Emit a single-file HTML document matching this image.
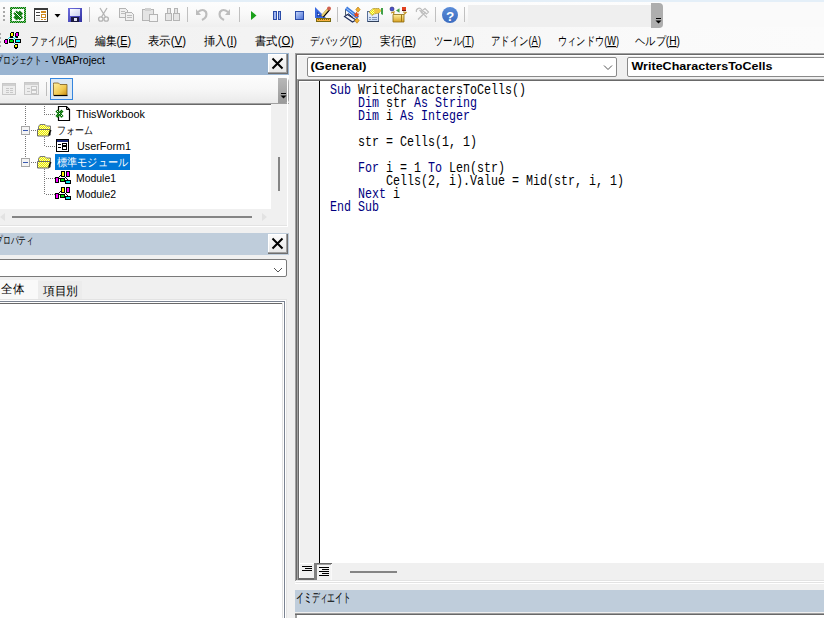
<!DOCTYPE html>
<html><head><meta charset="utf-8">
<style>
*{box-sizing:border-box}
html,body{margin:0;padding:0}
body{width:824px;height:618px;overflow:hidden;position:relative;background:#F0F0F0;font-family:"Liberation Sans",sans-serif;font-size:12px;color:#000}
.a{position:absolute}
#topband{left:0;top:0;width:824px;height:2px;background:#E4EFF8}
#top{left:0;top:2px;width:824px;height:51px;background:#FAFAFA}
#tb{left:0;top:2px;width:663px;height:25px;background:linear-gradient(#FDFDFD,#FAFAFA 40%,#EFEFEF);border-radius:3px 0 0 0}
#mb{left:0;top:27px;width:824px;height:26px;background:linear-gradient(to right,#F0F0F0,#F4F4F4 40%,#FAFAFA 80%,#FBFBFB)}
.code{position:absolute;left:330px;top:84px;font-family:"Liberation Mono",monospace;font-size:15px;line-height:13px;transform:scaleX(0.7778);transform-origin:0 0;white-space:pre;color:#000}
.k{color:#00007F}
</style></head><body>
<div id="topband" class="a"></div>
<div id="top" class="a"></div>
<div id="tb" class="a"></div>
<div id="mb" class="a"></div>
<svg class="a" style="left:0;top:0" width="680" height="30" shape-rendering="crispEdges">
<!-- grip -->
<g fill="#A8A8A8"><rect x="3" y="7" width="2" height="2"/><rect x="3" y="11" width="2" height="2"/><rect x="3" y="15" width="2" height="2"/><rect x="3" y="19" width="2" height="2"/></g>
<!-- excel -->
<defs><pattern id="chk" x="0" y="0" width="2" height="2" patternUnits="userSpaceOnUse"><rect width="2" height="2" fill="#7CB87C"/><rect width="1" height="1" fill="#008000"/><rect x="1" y="1" width="1" height="1" fill="#008000"/></pattern>
<pattern id="chk2" x="0" y="0" width="2" height="2" patternUnits="userSpaceOnUse"><rect width="2" height="2" fill="#2E9A2E"/><rect width="1" height="1" fill="#006400"/><rect x="1" y="1" width="1" height="1" fill="#006400"/></pattern></defs>
<rect x="10" y="7" width="16" height="16" fill="url(#chk)"/>
<rect x="12" y="9" width="12" height="12" fill="#FFFFFF"/>
<path d="M15 12 L21.5 19 M21.5 12 L15 19" stroke="url(#chk2)" stroke-width="4.6" shape-rendering="auto"/>
<g fill="#FFFFFF"><rect x="14" y="11" width="1" height="1"/><rect x="15" y="12" width="1" height="1"/><rect x="16" y="13" width="1" height="1"/><rect x="17" y="14" width="1" height="1"/><rect x="18" y="15" width="1" height="1"/><rect x="19" y="16" width="1" height="1"/><rect x="20" y="17" width="1" height="1"/></g>
<!-- userform -->
<rect x="34" y="8" width="14" height="14" fill="#3A3A3A"/>
<rect x="35" y="10" width="12" height="11" fill="#fff"/>
<rect x="36" y="12" width="4" height="1" fill="#444"/><rect x="36" y="15" width="4" height="1" fill="#444"/>
<rect x="36" y="17" width="4" height="3" fill="#E8E8E8"/>
<rect x="41" y="11" width="5" height="2" fill="#D08A20"/><rect x="41" y="14" width="5" height="4" fill="#D08A20"/><rect x="42" y="15" width="3" height="2" fill="#fff"/><rect x="41" y="19" width="2" height="1" fill="#D08A20"/><rect x="44" y="19" width="2" height="1" fill="#D08A20"/>
<path d="M54.5 14 h6 l-3 3.5z" fill="#000" shape-rendering="auto"/>
<!-- save -->
<defs><linearGradient id="sav" x1="0" y1="0" x2="1" y2="1"><stop offset="0" stop-color="#7070E0"/><stop offset="1" stop-color="#3030A0"/></linearGradient>
<linearGradient id="lab" x1="0" y1="0" x2="1" y2="1"><stop offset="0" stop-color="#FFFFFF"/><stop offset="1" stop-color="#C8D0F0"/></linearGradient></defs>
<rect x="68" y="8" width="14" height="14" fill="url(#sav)"/>
<rect x="70" y="9" width="10" height="7" fill="url(#lab)"/>
<rect x="71" y="17" width="8" height="5" fill="#1A1A40"/><rect x="74" y="18" width="3" height="3" fill="#E0E0F0"/>
<rect x="89" y="7" width="1" height="15" fill="#C0C0C0"/>
<!-- cut (disabled) -->
<g fill="none" stroke="#B4B4B4" stroke-width="1.3" shape-rendering="auto"><path d="M100 8 L105.5 17 M107 8 L101.5 17"/><circle cx="100.8" cy="19" r="2.2"/><circle cx="106.2" cy="19" r="2.2"/></g>
<!-- copy -->
<g fill="#F0F0F0" stroke="#B4B4B4"><path d="M119.5 8.5 h6 l2 2 v7 h-8z"/><path d="M125.5 12.5 h6 l2 2 v6 h-8z"/></g>
<g fill="#BDBDBD"><rect x="121" y="11" width="4" height="1"/><rect x="121" y="13" width="4" height="1"/><rect x="127" y="15" width="5" height="1"/><rect x="127" y="17" width="5" height="1"/></g>
<!-- paste -->
<rect x="142.5" y="9.5" width="11" height="11" fill="#E4E4E4" stroke="#B4B4B4"/>
<rect x="145" y="8" width="6" height="3" fill="#D0D0D0"/>
<rect x="149.5" y="14.5" width="8" height="7" fill="#F4F4F4" stroke="#B4B4B4"/>
<!-- find -->
<g fill="#E6E6E6" stroke="#B4B4B4"><rect x="165.5" y="13.5" width="6" height="7"/><rect x="173.5" y="13.5" width="6" height="7"/><rect x="167.5" y="8.5" width="3" height="5"/><rect x="174.5" y="8.5" width="3" height="5"/></g>
<rect x="187" y="7" width="1" height="15" fill="#C0C0C0"/>
<!-- undo / redo -->
<g fill="none" stroke="#BDBDBD" stroke-width="2.2" shape-rendering="auto"><path d="M198 12 Q203 8 206 12 Q208 17 202 20"/><path d="M228 12 Q223 8 220 12 Q218 17 224 20"/></g>
<g fill="#BDBDBD" shape-rendering="auto"><path d="M196 9 v6 h5z"/><path d="M230 9 v6 h-5z"/></g>
<rect x="239" y="7" width="1" height="15" fill="#C0C0C0"/>
<!-- run -->
<path d="M251 11 L256.5 15.5 L251 20z" fill="#1AA01A" shape-rendering="auto"/>
<!-- pause -->
<rect x="273.5" y="11.5" width="2.5" height="8" fill="#9DB4F0" stroke="#2B4CA8" stroke-width="1"/><rect x="278" y="11.5" width="2.5" height="8" fill="#9DB4F0" stroke="#2B4CA8" stroke-width="1"/>
<!-- stop -->
<defs><linearGradient id="stp" x1="0" y1="0" x2="1" y2="1"><stop offset="0" stop-color="#C8D8FA"/><stop offset="1" stop-color="#4A70D8"/></linearGradient></defs><rect x="295.5" y="11.5" width="8" height="8" fill="url(#stp)" stroke="#2B4CA8" stroke-width="1"/>
<!-- design -->
<g shape-rendering="auto">
<path d="M315 7 L315 18 L326 18z" fill="#3A6AE0"/>
<path d="M317 11.5 L317 16.5 L322 16.5z" fill="#1E3EA8"/>
<circle cx="318.5" cy="14.5" r="0.8" fill="#FFF"/>
<path d="M322.5 16.5 L329 9" stroke="#000" stroke-width="3.2"/>
<path d="M322 16 L328.5 8.5" stroke="#E8D070" stroke-width="2.2"/>
<circle cx="329" cy="8.5" r="2" fill="#D06050"/>
</g>
<rect x="316" y="18" width="15" height="4" fill="#7A6A10"/>
<rect x="317" y="19" width="13" height="2" fill="#F8B040"/>
<g fill="#7A6A10"><rect x="318" y="19" width="1" height="1"/><rect x="320" y="19" width="1" height="1"/><rect x="322" y="19" width="1" height="1"/><rect x="324" y="19" width="1" height="1"/><rect x="326" y="19" width="1" height="1"/><rect x="328" y="19" width="1" height="1"/></g>
<rect x="337" y="7" width="1" height="15" fill="#C0C0C0"/>
<!-- project explorer -->
<g shape-rendering="auto">
<path d="M344.5 16.5 L352.5 22 L356 20 L347.5 14.5z" fill="#F4F6FA" stroke="#1E2C58" stroke-width="1.1"/>
<path d="M345.5 9 v6" stroke="#506070" stroke-width="1"/>
<path d="M346 8 L358 17.5" stroke="#3C7AE0" stroke-width="3.6"/>
<path d="M346.5 8.5 L357 16.5" stroke="#A8CCF8" stroke-width="1"/>
<path d="M348 13.5 L353 17.5" stroke="#1E2C58" stroke-width="1"/>
<path d="M358 7 l2.2 2.6 l-2.2 2.6 l-2.2 -2.6z" fill="#F0B030" stroke="#B07000" stroke-width="0.6"/>
<path d="M357 18 l2.2 2.6 l-2.2 2.6 l-2.2 -2.6z" fill="#F0B030" stroke="#B07000" stroke-width="0.6"/>
<path d="M356.5 11.5 l1 2 l2 0.3 l-1.5 1.5 l0.4 2 l-1.9 -1 l-1.9 1 l0.4 -2 l-1.5 -1.5 l2 -0.3z" fill="#E04818"/>
</g>
<!-- properties -->
<defs><linearGradient id="card" x1="0" y1="0" x2="0" y2="1"><stop offset="0" stop-color="#F4F8FF"/><stop offset="1" stop-color="#C8DAF4"/></linearGradient>
<linearGradient id="gold" x1="0" y1="0" x2="0" y2="1"><stop offset="0" stop-color="#FFF0A0"/><stop offset="1" stop-color="#D8A020"/></linearGradient></defs>
<rect x="367.5" y="11.5" width="11" height="10" fill="url(#card)" stroke="#5A7098"/>
<rect x="368" y="21" width="11" height="1" fill="#30405A"/>
<g fill="#8094B8"><rect x="369" y="17" width="2" height="1"/><rect x="372" y="17" width="5" height="1"/><rect x="369" y="19" width="2" height="1"/><rect x="372" y="19" width="5" height="1"/></g>
<path d="M369 12 L373 8.5 L379 8.5 L381 10.5 L379 13 L374 14 L372 15.5z" fill="url(#ychk)" stroke="#A08020" stroke-width="0.6" shape-rendering="auto"/>
<path d="M374 9 L379.5 9 L381 11 L378.5 13 L374.5 13z" fill="#F0C840" shape-rendering="auto"/>
<path d="M381 8 L383 8 L383 15 L381 14z" fill="#40A048" shape-rendering="auto"/>
<!-- object browser -->
<circle cx="392" cy="9" r="2" fill="#4850D0" stroke="#202060" stroke-width="0.6" shape-rendering="auto"/>
<path d="M396 10.5 L399.5 8.2 L399.5 12.7z" fill="#40A048" shape-rendering="auto"/>
<rect x="402" y="7" width="4" height="4" fill="#E04020"/><rect x="402" y="10" width="4" height="1" fill="#701010"/>
<path d="M393 14.5 h11 v7.5 h-11z" fill="url(#gold)" stroke="#8A6A10" stroke-width="0.8" shape-rendering="auto"/>
<path d="M391 13 L394 12 L393.5 14.5 M404 14.5 L406 12.5 L403 12" fill="none" stroke="#C09020" stroke-width="1.2" shape-rendering="auto"/>
<path d="M401 15 v7" stroke="#A07818" stroke-width="1"/>
<!-- toolbox disabled -->
<g fill="none" stroke="#BDBDBD" stroke-width="1.2" shape-rendering="auto">
<path d="M418 19.5 L425.5 12 M419.5 10 L427 17.5"/>
<path d="M416.5 12 a2.8 2.8 0 1 1 4.5 1.2"/>
<path d="M422.5 10.5 L425 8.5 L428.5 12 L426.5 14z"/>
</g>
<rect x="435" y="7" width="1" height="15" fill="#C0C0C0"/>
<!-- help -->
<circle cx="450" cy="15" r="8" fill="url(#hlp)" shape-rendering="auto"/>
<defs><linearGradient id="hlp" x1="0" y1="0" x2="0" y2="1"><stop offset="0" stop-color="#5A8CD8"/><stop offset="1" stop-color="#3C6CC0"/></linearGradient></defs><text x="450" y="20.5" font-family="Liberation Sans" font-weight="bold" font-size="13.5" fill="#fff" text-anchor="middle">?</text>
<rect x="464" y="7" width="1" height="15" fill="#C0C0C0"/>
<!-- combo -->
<rect x="468" y="5" width="183" height="22" fill="#EFEFEF"/>
<path d="M651 3 h8 q4 0 4 4 v17 q0 4 -4 4 h-8z" fill="#AEAEAE" shape-rendering="auto"/>
<rect x="656" y="18" width="5" height="1" fill="#000"/>
<path d="M655.5 20.5 h6 l-3 3z" fill="#000" shape-rendering="auto"/>
</svg>
<svg class="a" style="left:0;top:28px" width="26" height="26" shape-rendering="crispEdges">
<g fill="#A8A8A8"><rect x="0" y="5" width="1" height="2"/><rect x="0" y="9" width="1" height="2"/><rect x="0" y="13" width="1" height="2"/><rect x="0" y="17" width="1" height="2"/></g>
<g fill="#000">
<rect x="10" y="5" width="3" height="5"/><rect x="11" y="4" width="3" height="4"/>
<rect x="15" y="5" width="3" height="5"/><rect x="16" y="4" width="3" height="4"/>
<rect x="4" y="12" width="4" height="3"/><rect x="5" y="11" width="3" height="5"/>
<rect x="9" y="11" width="5" height="4"/>
<rect x="15" y="11" width="6" height="4"/>
<rect x="14" y="17" width="4" height="3"/><rect x="15" y="16" width="3" height="4"/><rect x="15" y="20" width="2" height="1"/>
</g>
<rect x="11" y="5" width="2" height="3" fill="#FFFF00"/>
<rect x="16" y="5" width="2" height="3" fill="#FF00FF"/>
<rect x="5" y="12" width="2" height="3" fill="#FF00FF"/>
<rect x="10" y="12" width="3" height="2" fill="#00E000"/>
<rect x="16" y="12" width="4" height="2" fill="#00FFFF"/>
<rect x="15" y="17" width="2" height="2" fill="#FFFF00"/>
<g fill="#00E0E0"><rect x="8" y="10" width="1" height="1"/><rect x="9" y="9" width="1" height="1"/>
<rect x="13" y="9" width="1" height="1"/><rect x="14" y="10" width="1" height="1"/><rect x="15" y="9" width="1" height="1"/><rect x="13" y="11" width="1" height="1"/><rect x="14" y="15" width="1" height="1"/></g>
</svg>
<svg class="a" style="left:0;top:28px" width="824" height="24" font-family="Liberation Sans, sans-serif" font-size="12">
<text x="30" y="17" textLength="47" lengthAdjust="spacingAndGlyphs">ファイル(<tspan text-decoration="underline">F</tspan>)</text>
<text x="95" y="17" textLength="36" lengthAdjust="spacingAndGlyphs">編集(<tspan text-decoration="underline">E</tspan>)</text>
<text x="148" y="17" textLength="38" lengthAdjust="spacingAndGlyphs">表示(<tspan text-decoration="underline">V</tspan>)</text>
<text x="204" y="17" textLength="33" lengthAdjust="spacingAndGlyphs">挿入(<tspan text-decoration="underline">I</tspan>)</text>
<text x="255" y="17" textLength="39" lengthAdjust="spacingAndGlyphs">書式(<tspan text-decoration="underline">O</tspan>)</text>
<text x="310" y="17" textLength="52" lengthAdjust="spacingAndGlyphs">デバッグ(<tspan text-decoration="underline">D</tspan>)</text>
<text x="380" y="17" textLength="36" lengthAdjust="spacingAndGlyphs">実行(<tspan text-decoration="underline">R</tspan>)</text>
<text x="434" y="17" textLength="40" lengthAdjust="spacingAndGlyphs">ツール(<tspan text-decoration="underline">T</tspan>)</text>
<text x="491" y="17" textLength="50" lengthAdjust="spacingAndGlyphs">アドイン(<tspan text-decoration="underline">A</tspan>)</text>
<text x="558" y="17" textLength="61" lengthAdjust="spacingAndGlyphs">ウィンドウ(<tspan text-decoration="underline">W</tspan>)</text>
<text x="635" y="17" textLength="45" lengthAdjust="spacingAndGlyphs">ヘルプ(<tspan text-decoration="underline">H</tspan>)</text>
</svg>

<!-- left panel -->
<svg class="a" style="left:0;top:53px" width="289" height="565" font-family="Liberation Sans, sans-serif">
<!-- project title -->
<rect x="0" y="0" width="289" height="22" fill="#99B4D1"/>
<text x="-5" y="11" font-size="11" textLength="47" lengthAdjust="spacingAndGlyphs" fill="#000">プロジェクト</text><text x="45" y="11" font-size="11" textLength="60" lengthAdjust="spacingAndGlyphs" fill="#000">- VBAProject</text>
<!-- X button -->
<g shape-rendering="crispEdges">
<rect x="268" y="1" width="20" height="20" fill="#6E6E6E"/>
<rect x="268" y="1" width="19" height="19" fill="#A0A0A0"/>
<rect x="268" y="1" width="18" height="18" fill="#FFFFFF"/>
<rect x="269" y="2" width="17" height="17" fill="url(#xbg)"/>
</g>
<path d="M272.5 5.5 L282.5 15.5 M282.5 5.5 L272.5 15.5" stroke="#000" stroke-width="2"/>
<!-- project toolbar -->
<rect x="0" y="22" width="289" height="28" fill="url(#ptg)"/>
<defs><linearGradient id="xbg" x1="0" y1="0" x2="0" y2="1"><stop offset="0" stop-color="#FAFAFA"/><stop offset="1" stop-color="#E8E8E8"/></linearGradient><linearGradient id="ptg" x1="0" y1="0" x2="0" y2="1"><stop offset="0" stop-color="#FDFDFD"/><stop offset="0.5" stop-color="#F7F7F7"/><stop offset="1" stop-color="#EAEAEA"/></linearGradient>
<linearGradient id="fold" x1="0" y1="0" x2="1" y2="1"><stop offset="0" stop-color="#FFF0A0"/><stop offset="0.6" stop-color="#F0C850"/><stop offset="1" stop-color="#C88A10"/></linearGradient>
<linearGradient id="chev" x1="0" y1="0" x2="0" y2="1"><stop offset="0" stop-color="#B8B8B8"/><stop offset="1" stop-color="#9A9A9A"/></linearGradient>
</defs>
<g shape-rendering="crispEdges">
<!-- disabled icons -->
<rect x="2.5" y="30.5" width="13" height="11" fill="#EDEDED" stroke="#C8C8C8"/>
<rect x="3" y="31" width="12" height="2" fill="#D0D0D0"/>
<g fill="#C8C8C8"><rect x="6" y="35" width="3" height="1"/><rect x="10" y="35" width="3" height="1"/><rect x="6" y="37" width="3" height="1"/><rect x="10" y="37" width="3" height="1"/><rect x="6" y="39" width="3" height="1"/><rect x="10" y="39" width="3" height="1"/></g>
<rect x="24.5" y="29.5" width="14" height="12" fill="#EDEDED" stroke="#C8C8C8"/>
<rect x="25" y="30" width="13" height="2" fill="#D0D0D0"/>
<g fill="#C8C8C8"><rect x="27" y="35" width="3" height="1"/><rect x="27" y="38" width="3" height="1"/></g>
<rect x="31.5" y="33.5" width="5" height="3" fill="#F4F4F4" stroke="#C8C8C8"/><rect x="31.5" y="37.5" width="5" height="3" fill="#F4F4F4" stroke="#C8C8C8"/>
<rect x="46" y="29" width="1" height="14" fill="#BDBDBD"/>
<!-- folder button -->
<rect x="50.5" y="25.5" width="22" height="21" fill="#DCE8F4" stroke="#3585DD"/>
</g>
<path d="M53.5 31.5 v-1.5 h5 l1.5 1.5 h7 v11 h-13.5z" fill="url(#fold)" stroke="#7A5A20" stroke-width="0.8"/>
<path d="M54 42.5 h13.5" stroke="#000" stroke-width="1.2"/>
<!-- chevron -->
<path d="M278 25 h7 q4 0 4 4 v17 q0 4 -4 4 h-7z" fill="url(#chev)"/>
<rect x="281" y="40" width="5" height="1" fill="#000"/>
<path d="M280.5 42.5 h6 l-3 3z" fill="#000"/>
<!-- tree border -->
<rect x="0" y="50" width="289" height="1" fill="#A0A0A0"/>
<rect x="0" y="51" width="271" height="1" fill="#696969"/>
<rect x="0" y="52" width="271" height="104" fill="#FFFFFF"/>
<!-- scrollbars -->
<rect x="271" y="51" width="17" height="123" fill="#F0F0F0"/>
<rect x="0" y="156" width="271" height="17" fill="#F0F0F0"/>
<rect x="278" y="104" width="2" height="34" fill="#858585"/>
<rect x="12" y="163" width="240" height="2" fill="#858585"/>
<path d="M5 160 L0 164 L5 168z" fill="#E2E2E2"/>
<path d="M262 160 L267 164 L262 168z" fill="#E2E2E2"/>
<rect x="0" y="172" width="288" height="1" fill="#E3E3E3"/>
<rect x="0" y="173" width="288" height="1" fill="#FFFFFF"/>
<rect x="287" y="22" width="1" height="151" fill="#FFFFFF"/>
<!-- tree lines -->
<g fill="#767676" shape-rendering="crispEdges">
<rect x="25" y="53" width="1" height="1"/>
<rect x="25" y="55" width="1" height="1"/>
<rect x="25" y="57" width="1" height="1"/>
<rect x="25" y="59" width="1" height="1"/>
<rect x="25" y="61" width="1" height="1"/>
<rect x="25" y="63" width="1" height="1"/>
<rect x="25" y="65" width="1" height="1"/>
<rect x="25" y="67" width="1" height="1"/>
<rect x="25" y="69" width="1" height="1"/>
<rect x="25" y="71" width="1" height="1"/>
<rect x="25" y="83" width="1" height="1"/>
<rect x="25" y="85" width="1" height="1"/>
<rect x="25" y="87" width="1" height="1"/>
<rect x="25" y="89" width="1" height="1"/>
<rect x="25" y="91" width="1" height="1"/>
<rect x="25" y="93" width="1" height="1"/>
<rect x="25" y="95" width="1" height="1"/>
<rect x="25" y="97" width="1" height="1"/>
<rect x="25" y="99" width="1" height="1"/>
<rect x="25" y="101" width="1" height="1"/>
<rect x="25" y="103" width="1" height="1"/>
<rect x="44" y="53" width="1" height="1"/>
<rect x="44" y="55" width="1" height="1"/>
<rect x="44" y="57" width="1" height="1"/>
<rect x="44" y="59" width="1" height="1"/>
<rect x="44" y="61" width="1" height="1"/>
<rect x="46" y="61" width="1" height="1"/>
<rect x="48" y="61" width="1" height="1"/>
<rect x="50" y="61" width="1" height="1"/>
<rect x="52" y="61" width="1" height="1"/>
<rect x="54" y="61" width="1" height="1"/>
<rect x="44" y="84" width="1" height="1"/>
<rect x="44" y="86" width="1" height="1"/>
<rect x="44" y="88" width="1" height="1"/>
<rect x="44" y="90" width="1" height="1"/>
<rect x="44" y="92" width="1" height="1"/>
<rect x="46" y="93" width="1" height="1"/>
<rect x="48" y="93" width="1" height="1"/>
<rect x="50" y="93" width="1" height="1"/>
<rect x="52" y="93" width="1" height="1"/>
<rect x="54" y="93" width="1" height="1"/>
<rect x="44" y="116" width="1" height="1"/>
<rect x="44" y="118" width="1" height="1"/>
<rect x="44" y="120" width="1" height="1"/>
<rect x="44" y="122" width="1" height="1"/>
<rect x="44" y="124" width="1" height="1"/>
<rect x="44" y="126" width="1" height="1"/>
<rect x="44" y="128" width="1" height="1"/>
<rect x="44" y="130" width="1" height="1"/>
<rect x="44" y="132" width="1" height="1"/>
<rect x="44" y="134" width="1" height="1"/>
<rect x="44" y="136" width="1" height="1"/>
<rect x="44" y="138" width="1" height="1"/>
<rect x="44" y="140" width="1" height="1"/>
<rect x="46" y="125" width="1" height="1"/>
<rect x="48" y="125" width="1" height="1"/>
<rect x="50" y="125" width="1" height="1"/>
<rect x="52" y="125" width="1" height="1"/>
<rect x="54" y="125" width="1" height="1"/>
<rect x="46" y="141" width="1" height="1"/>
<rect x="48" y="141" width="1" height="1"/>
<rect x="50" y="141" width="1" height="1"/>
<rect x="52" y="141" width="1" height="1"/>
<rect x="54" y="141" width="1" height="1"/>
<rect x="31" y="77" width="1" height="1"/>
<rect x="33" y="77" width="1" height="1"/>
<rect x="35" y="77" width="1" height="1"/>
<rect x="31" y="109" width="1" height="1"/>
<rect x="33" y="109" width="1" height="1"/>
<rect x="35" y="109" width="1" height="1"/>
</g>
<!-- minus boxes -->
<g shape-rendering="crispEdges">
<rect x="21.5" y="73.5" width="8" height="8" fill="#F4F4F4" stroke="#A6A6A6"/>
<rect x="23" y="77" width="5" height="1" fill="#3A5AB0"/>
<rect x="21.5" y="105.5" width="8" height="8" fill="#F4F4F4" stroke="#A6A6A6"/>
<rect x="23" y="109" width="5" height="1" fill="#3A5AB0"/>
</g>
<!-- ThisWorkbook icon -->
<path d="M58.5 53.5 h8 l3 3 v11 h-11z" fill="#FFF" stroke="#000" stroke-width="1.2"/>
<path d="M66.5 53.5 v3 h3" fill="none" stroke="#000" stroke-width="1"/>
<path d="M56.5 57.5 L62.5 64 M62.5 57.5 L56.5 64" stroke="url(#chk2)" stroke-width="3"/>
<g fill="#FFF" shape-rendering="crispEdges"><rect x="57" y="58" width="1" height="1"/><rect x="59" y="60" width="1" height="1"/><rect x="61" y="62" width="1" height="1"/></g>
<!-- folders -->
<defs><pattern id="ychk" x="0" y="0" width="2" height="2" patternUnits="userSpaceOnUse"><rect width="2" height="2" fill="#FFFFA8"/><rect width="1" height="1" fill="#E8E800"/><rect x="1" y="1" width="1" height="1" fill="#E8E800"/></pattern></defs>
<path d="M38.5 73.5 l1.5 -2 h5 l1.5 1.5 h4 v9 h-12z" fill="url(#ychk)" stroke="#7A7A7A" stroke-width="1"/>
<path d="M37.5 76.5 h12.5 l1 1 l-2 5.5 h-11.5z" fill="url(#ychk)" stroke="#6A6A6A" stroke-width="1"/>
<path d="M50.5 77 l-1.8 5.5" stroke="#000" stroke-width="1.3"/>
<path d="M38.5 105.5 l1.5 -2 h5 l1.5 1.5 h4 v9 h-12z" fill="url(#ychk)" stroke="#7A7A7A" stroke-width="1"/>
<path d="M37.5 108.5 h12.5 l1 1 l-2 5.5 h-11.5z" fill="url(#ychk)" stroke="#6A6A6A" stroke-width="1"/>
<path d="M50.5 109 l-1.8 5.5" stroke="#000" stroke-width="1.3"/>
<!-- userform icon -->
<g shape-rendering="crispEdges">
<rect x="56.5" y="86.5" width="12" height="12" fill="#FFF" stroke="#000"/>
<rect x="57" y="87" width="11" height="2" fill="#1A2A7A"/>
<rect x="58" y="91" width="3" height="1" fill="#000"/><rect x="58" y="94" width="3" height="1" fill="#000"/>
<rect x="62.5" y="90.5" width="4" height="2" fill="#FFF" stroke="#000"/><rect x="62.5" y="93.5" width="4" height="3" fill="#FFF" stroke="#000"/>
</g>
<!-- selection -->
<rect x="55" y="101" width="75" height="16" fill="#0078D7"/>
<!-- module icons -->
<g id="modic" shape-rendering="crispEdges">
<rect x="61" y="118" width="4" height="6" fill="#000"/><rect x="62" y="119" width="2" height="4" fill="#FFFF00"/>
<rect x="66" y="118" width="4" height="6" fill="#000"/><rect x="67" y="119" width="2" height="4" fill="#FF00FF"/>
<rect x="55" y="124" width="4" height="6" fill="#000"/><rect x="56" y="125" width="2" height="4" fill="#FF00FF"/>
<rect x="60" y="125" width="5" height="4" fill="#000"/><rect x="61" y="126" width="3" height="2" fill="#00E000"/>
<rect x="65" y="127" width="6" height="4" fill="#000"/><rect x="66" y="128" width="4" height="2" fill="#00E0E0"/>
<g fill="#000"><rect x="59" y="123" width="1" height="1"/><rect x="60" y="122" width="1" height="1"/>
<rect x="65" y="124" width="1" height="1"/><rect x="64" y="123" width="1" height="1"/><rect x="66" y="125" width="1" height="1"/><rect x="67" y="126" width="1" height="1"/>
<rect x="66" y="123" width="1" height="1"/><rect x="64" y="125" width="1" height="1"/><rect x="59" y="125" width="1" height="1"/></g>
</g>
<g shape-rendering="crispEdges" transform="translate(0 16)">
<rect x="61" y="118" width="4" height="6" fill="#000"/><rect x="62" y="119" width="2" height="4" fill="#FFFF00"/>
<rect x="66" y="118" width="4" height="6" fill="#000"/><rect x="67" y="119" width="2" height="4" fill="#FF00FF"/>
<rect x="55" y="124" width="4" height="6" fill="#000"/><rect x="56" y="125" width="2" height="4" fill="#FF00FF"/>
<rect x="60" y="125" width="5" height="4" fill="#000"/><rect x="61" y="126" width="3" height="2" fill="#00E000"/>
<rect x="65" y="127" width="6" height="4" fill="#000"/><rect x="66" y="128" width="4" height="2" fill="#00E0E0"/>
<g fill="#000"><rect x="59" y="123" width="1" height="1"/><rect x="60" y="122" width="1" height="1"/>
<rect x="65" y="124" width="1" height="1"/><rect x="64" y="123" width="1" height="1"/><rect x="66" y="125" width="1" height="1"/><rect x="67" y="126" width="1" height="1"/>
<rect x="66" y="123" width="1" height="1"/><rect x="64" y="125" width="1" height="1"/><rect x="59" y="125" width="1" height="1"/></g>
</g>
<!-- tree text -->
<g font-size="11" fill="#000">
<text x="76" y="65" textLength="69" lengthAdjust="spacingAndGlyphs">ThisWorkbook</text>
<text x="57" y="81" textLength="36" lengthAdjust="spacingAndGlyphs">フォーム</text>
<text x="77" y="97" textLength="54" lengthAdjust="spacingAndGlyphs">UserForm1</text>
<text x="57" y="113" textLength="71" lengthAdjust="spacingAndGlyphs" fill="#FFF">標準モジュール</text>
<text x="76" y="129" textLength="40" lengthAdjust="spacingAndGlyphs">Module1</text>
<text x="76" y="145" textLength="40" lengthAdjust="spacingAndGlyphs">Module2</text>
</g>
<!-- properties title -->
<rect x="0" y="180" width="289" height="22" fill="#BFCDDB"/>
<text x="-5" y="191" font-size="11" textLength="39" lengthAdjust="spacingAndGlyphs" fill="#000">プロパティ</text>
<g shape-rendering="crispEdges">
<rect x="268" y="181" width="20" height="20" fill="#6E6E6E"/>
<rect x="268" y="181" width="19" height="19" fill="#A0A0A0"/>
<rect x="268" y="181" width="18" height="18" fill="#FFFFFF"/>
<rect x="269" y="182" width="17" height="17" fill="url(#xbg)"/>
</g>
<path d="M272.5 185.5 L282.5 195.5 M282.5 185.5 L272.5 195.5" stroke="#000" stroke-width="2"/>
<!-- combo -->
<rect x="-3.5" y="206.5" width="290" height="17" rx="1.5" fill="#FFF" stroke="#7A7A7A"/>
<path d="M274 215 l4 4 l4 -4" fill="none" stroke="#555" stroke-width="1"/>
<!-- tabs -->
<rect x="0" y="227" width="38" height="21" fill="#F9F9F9"/>
<rect x="38" y="228" width="44" height="19" fill="#ECECEC"/>
<text x="1" y="240" font-size="12" textLength="23" lengthAdjust="spacingAndGlyphs">全体</text>
<text x="43" y="242" font-size="12" textLength="35" lengthAdjust="spacingAndGlyphs">項目別</text>
<!-- list -->
<g shape-rendering="crispEdges">
<rect x="-1" y="246" width="288" height="319" fill="#E3E3E3"/>
<rect x="-1" y="247" width="287" height="318" fill="#FFFFFF"/>
<rect x="-1" y="248" width="286" height="317" fill="#7A8290"/>
<rect x="-1" y="249" width="285" height="316" fill="#FFFFFF"/>
<rect x="-1" y="250" width="284" height="315" fill="#E3E3E3"/>
<rect x="-1" y="250" width="283" height="1" fill="#696969"/>
<rect x="-1" y="251" width="283" height="314" fill="#FFFFFF"/>
</g>
</svg>

<!-- code window -->
<svg class="a" style="left:295px;top:53px" width="529" height="565" font-family="Liberation Sans, sans-serif" shape-rendering="crispEdges">
<rect x="0" y="0" width="529" height="537" fill="#F0F0F0"/>
<rect x="0" y="0" width="529" height="1" fill="#A0A0A0"/>
<rect x="0" y="0" width="1" height="529" fill="#A0A0A0"/>
<rect x="1" y="1" width="528" height="1" fill="#696969"/>
<rect x="1" y="1" width="1" height="528" fill="#696969"/>
<rect x="2" y="2" width="527" height="1" fill="#FFFFFF"/>
<rect x="2" y="2" width="1" height="24" fill="#FFFFFF"/>
<!-- combos -->
<rect x="12.5" y="4.5" width="309" height="19" rx="1.5" fill="#FFF" stroke="#8A8A8A" shape-rendering="auto"/>
<path d="M309 12.5 l4 4 l4 -4" fill="none" stroke="#555" stroke-width="1" shape-rendering="auto"/>
<rect x="332.5" y="4.5" width="220" height="19" rx="1.5" fill="#FFF" stroke="#8A8A8A" shape-rendering="auto"/>
<text x="15.5" y="17" font-size="11.5" font-weight="bold" textLength="56" lengthAdjust="spacingAndGlyphs">(General)</text>
<text x="336.5" y="17" font-size="11.5" font-weight="bold" textLength="141" lengthAdjust="spacingAndGlyphs">WriteCharactersToCells</text>
<!-- code area frame -->
<rect x="2" y="26" width="527" height="1" fill="#A0A0A0"/>
<rect x="2" y="26" width="1" height="501" fill="#A0A0A0"/>
<rect x="3" y="27" width="526" height="1" fill="#696969"/>
<rect x="3" y="27" width="1" height="500" fill="#696969"/>
<rect x="4" y="28" width="525" height="1" fill="#FFFFFF"/>
<rect x="4" y="28" width="1" height="482" fill="#FFFFFF"/>
<rect x="24" y="28" width="1" height="482" fill="#000"/>
<rect x="25" y="28" width="504" height="483" fill="#FFF"/>
<!-- bottom bar -->
<rect x="4" y="510" width="525" height="17" fill="#F0F0F0"/>
<!-- button 1 (raised) -->
<rect x="4" y="510" width="15" height="1" fill="#FFFFFF"/>
<rect x="4" y="510" width="1" height="15" fill="#FFFFFF"/>
<rect x="3" y="525" width="18" height="2" fill="#696969"/>
<rect x="19" y="510" width="2" height="17" fill="#808080"/>
<g fill="#000"><rect x="7" y="513" width="10" height="1"/><rect x="10" y="515" width="7" height="1"/><rect x="7" y="517" width="10" height="1"/></g>
<!-- button 2 (pressed) -->
<rect x="21" y="510" width="16" height="17" fill="#F4F4F4"/>
<rect x="20" y="510" width="17" height="1" fill="#696969"/>
<rect x="20" y="511" width="17" height="1" fill="#A0A0A0"/>
<rect x="20" y="510" width="2" height="17" fill="#808080"/>
<rect x="36" y="511" width="1" height="16" fill="#FAFAFA"/>
<g fill="#000"><rect x="24" y="514" width="10" height="1"/><rect x="27" y="516" width="7" height="1"/><rect x="24" y="518" width="10" height="1"/><rect x="27" y="520" width="7" height="1"/><rect x="24" y="522" width="10" height="1"/></g>
<rect x="55" y="518" width="47" height="2" fill="#858585"/>
<rect x="1" y="527" width="528" height="1" fill="#E3E3E3"/>
<rect x="0" y="528" width="529" height="1" fill="#FFFFFF"/>
<rect x="1" y="529" width="528" height="1" fill="#E3E3E3"/>
<rect x="0" y="530" width="529" height="1" fill="#FFFFFF"/>
<!-- immediate -->
<rect x="0" y="537" width="529" height="22" fill="#BFCDDB"/>
<text x="1" y="549" font-size="12.5" textLength="55" lengthAdjust="spacingAndGlyphs" fill="#000">イミディエイト</text>
<rect x="0" y="560" width="529" height="1" fill="#A0A0A0"/>
<rect x="0" y="561" width="529" height="1" fill="#696969"/>
<rect x="2" y="562" width="527" height="3" fill="#FFFFFF"/>
<rect x="0" y="562" width="2" height="3" fill="#A0A0A0"/>
</svg>

<div class="code"><span class="k">Sub</span> WriteCharactersToCells()
    <span class="k">Dim</span> str <span class="k">As String</span>
    <span class="k">Dim</span> i <span class="k">As Integer</span>

    str = Cells(1, 1)

    <span class="k">For</span> i = 1 <span class="k">To</span> Len(str)
        Cells(2, i).Value = Mid(str, i, 1)
    <span class="k">Next</span> i
<span class="k">End Sub</span></div>

</body></html>
